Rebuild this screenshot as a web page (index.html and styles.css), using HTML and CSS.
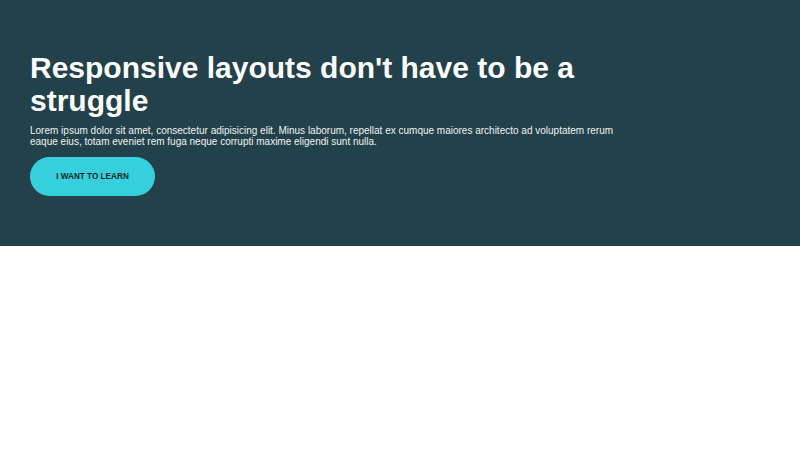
FILE: index.html
```html
<!DOCTYPE html>
<html lang="en">
<head>
<meta charset="utf-8">
<title>Responsive layouts</title>
<link rel="stylesheet" href="styles.css">
</head>
<body>
<section class="hero">
  <div class="hero-inner">
    <h1 class="hero-title">Responsive layouts don't have to be a struggle</h1>
    <p class="hero-text">Lorem ipsum dolor sit amet, consectetur adipisicing elit. Minus laborum, repellat ex cumque maiores architecto ad voluptatem rerum eaque eius, totam eveniet rem fuga neque corrupti maxime eligendi sunt nulla.</p>
    <a class="btn" href="#">I want to learn</a>
  </div>
</section>
</body>
</html>
```
FILE: styles.css
```css
* { box-sizing: border-box; }
html, body { margin: 0; padding: 0; background: #ffffff; }
body { font-family: "Liberation Sans", Arial, sans-serif; }
.hero {
  background: #23414a;
  color: #ffffff;
  height: 246px;
  padding: 51px 30px 0;
}
.hero-inner { width: 600px; }
.hero-title {
  margin: 0;
  font-size: 30px;
  line-height: 33px;
  font-weight: 700;
}
.hero-text {
  margin: 8px 0 10px;
  font-size: 10px;
  line-height: 11px;
  color: #eef2f3;
}
.btn {
  display: inline-block;
  background: #36d0dc;
  color: #15262d;
  text-decoration: none;
  text-transform: uppercase;
  font-weight: 700;
  font-size: 8.2px;
  line-height: 39px;
  height: 39px;
  width: 125px;
  text-align: center;
  border-radius: 20px;
}
```
